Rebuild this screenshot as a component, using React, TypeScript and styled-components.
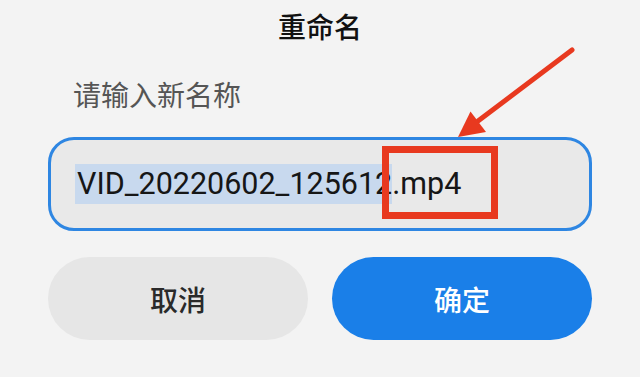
import React from 'react';
import styled, { createGlobalStyle } from 'styled-components';

const GlobalStyle = createGlobalStyle`
  html, body {
    margin: 0;
    padding: 0;
    background: #f3f3f3;
  }
  body {
    font-family: "Noto Sans CJK SC", "Noto Sans", sans-serif;
  }
`;

const Page = styled.div`
  position: relative;
  width: 640px;
  height: 377px;
  overflow: hidden;
  background: #f3f3f3;
`;

const Dialog = styled.div`
  width: 544px;
  margin: 0 auto;
  padding-top: 8px;
  display: flex;
  flex-direction: column;
`;

const Title = styled.h1`
  margin: 0;
  font-size: 28px;
  line-height: 36px;
  font-weight: 500;
  color: #111;
  text-align: center;
`;

const Label = styled.p`
  margin: 32px 0 0;
  padding-left: 25px;
  font-size: 28px;
  line-height: 36px;
  font-weight: 400;
  color: #555;
`;

const Field = styled.div`
  position: relative;
  margin-top: 25px;
  height: 94px;
  box-sizing: border-box;
  border: 3px solid #2e86e2;
  border-radius: 26px;
  background: #e9e9e9;
  display: flex;
  align-items: center;
  padding-left: 24px;
  font-family: Roboto, "Liberation Sans", sans-serif;
  font-size: 30.5px;
  color: #161616;
  white-space: nowrap;
`;

const Selected = styled.span`
  display: inline-block;
  line-height: 40px;
  padding-left: 2px;
  background: #c8d9ee;
`;

const Plain = styled.span`
  display: inline-block;
  line-height: 40px;
`;

const Highlight = styled.div`
  position: absolute;
  left: 331px;
  top: 6px;
  width: 116px;
  height: 73px;
  box-sizing: border-box;
  border: 7px solid #e8391f;
`;

const Actions = styled.div`
  display: grid;
  grid-template-columns: 1fr 1fr;
  gap: 24px;
  margin-top: 26px;
`;

const Button = styled.button<{ $primary?: boolean }>`
  height: 83px;
  border: none;
  border-radius: 42px;
  background: ${p => (p.$primary ? '#1a7fe8' : '#e6e6e6')};
  color: ${p => (p.$primary ? '#fff' : '#2a2a2a')};
  font-family: "Noto Sans CJK SC", "Noto Sans", sans-serif;
  font-size: 28px;
  font-weight: 500;
  padding: 0;
  cursor: pointer;
`;

const ArrowLayer = styled.svg`
  position: absolute;
  left: 0;
  top: 0;
  pointer-events: none;
`;

function App() {
  return (
    <>
      <GlobalStyle />
      <Page>
        <Dialog>
          <Title>重命名</Title>
          <Label>请输入新名称</Label>
          <Field>
            <Selected>VID_20220602_125612</Selected>
            <Plain>.mp4</Plain>
            <Highlight />
          </Field>
          <Actions>
            <Button>取消</Button>
            <Button $primary>确定</Button>
          </Actions>
        </Dialog>
        <ArrowLayer width="640" height="377" viewBox="0 0 640 377">
          <line x1="572" y1="50" x2="478" y2="121" stroke="#e8391f" strokeWidth="5" strokeLinecap="round" />
          <polygon points="458,137 470.5,111.5 486,132" fill="#e8391f" />
        </ArrowLayer>
      </Page>
    </>
  );
}

export default App;
